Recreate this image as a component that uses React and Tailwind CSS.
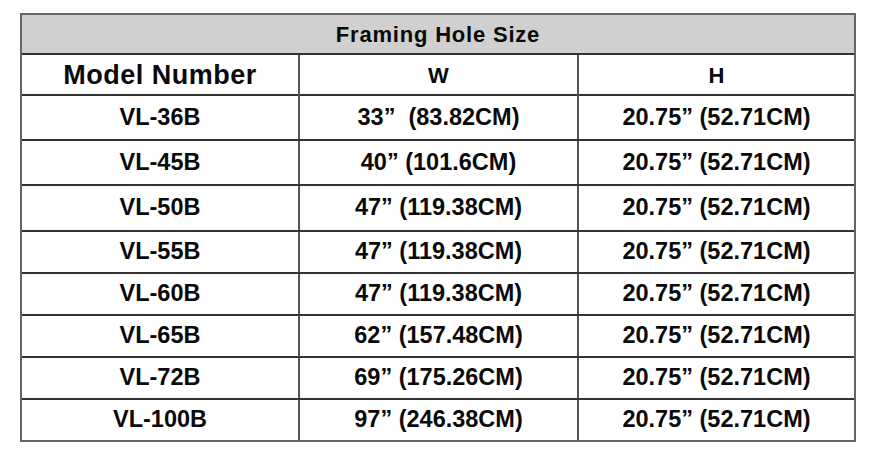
import React from 'react';

const rows = [
  { model: 'VL-36B', w: '33”  (83.82CM)', h: '20.75” (52.71CM)', height: 'h-[45px]' },
  { model: 'VL-45B', w: '40” (101.6CM)', h: '20.75” (52.71CM)', height: 'h-[45px]' },
  { model: 'VL-50B', w: '47” (119.38CM)', h: '20.75” (52.71CM)', height: 'h-[46px]' },
  { model: 'VL-55B', w: '47” (119.38CM)', h: '20.75” (52.71CM)', height: 'h-[42px]' },
  { model: 'VL-60B', w: '47” (119.38CM)', h: '20.75” (52.71CM)', height: 'h-[42px]' },
  { model: 'VL-65B', w: '62” (157.48CM)', h: '20.75” (52.71CM)', height: 'h-[42px]' },
  { model: 'VL-72B', w: '69” (175.26CM)', h: '20.75” (52.71CM)', height: 'h-[42px]' },
  { model: 'VL-100B', w: '97” (246.38CM)', h: '20.75” (52.71CM)', height: 'h-[42px]' },
];

const App = () => {
  return (
    <div className="w-[891px] h-[461px] bg-white pt-[13px] pl-[20px] text-[#0a0a0a]" style={{ fontFamily: '"Liberation Sans", Arial, sans-serif' }}>
      <div className="w-[836px] border-2 border-[#666] font-bold">
        <div className="h-[38px] bg-[#d0d0d0] flex items-center justify-center text-[22px] tracking-[0.8px]">
          Framing Hole Size
        </div>

        <div className="h-[41px] grid grid-cols-[276px_279px_1fr] border-t-2 border-[#333]">
          <div className="flex items-center justify-center text-[27px] tracking-[0.5px]">Model Number</div>
          <div className="flex items-center justify-center text-[22px] border-l-2 border-[#555]">W</div>
          <div className="flex items-center justify-center text-[22px] border-l-2 border-[#555]">H</div>
        </div>

        {rows.map(row => (
          <div key={row.model} className={`${row.height} grid grid-cols-[276px_279px_1fr] border-t-2 border-[#333] text-[23.5px]`}>
            <div className="flex items-center justify-center">{row.model}</div>
            <div className="flex items-center justify-center border-l-2 border-[#555] whitespace-pre">{row.w}</div>
            <div className="flex items-center justify-center border-l-2 border-[#555]">{row.h}</div>
          </div>
        ))}
      </div>
    </div>
  );
};

export default App;
